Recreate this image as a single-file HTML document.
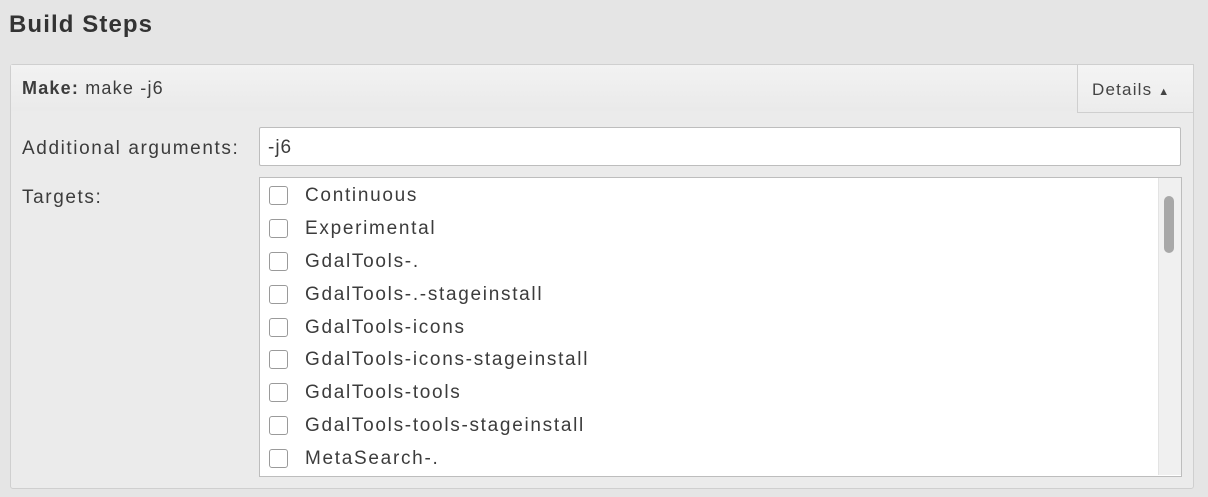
<!DOCTYPE html>
<html><head><style>
body{margin:0;width:1208px;height:497px;background:#e5e5e5;font-family:"Liberation Sans",sans-serif;color:#3c3c3c;position:relative;overflow:hidden}
.abs{position:absolute}
h1{position:absolute;left:9px;top:11px;margin:0;font-size:24px;font-weight:bold;color:#333;letter-spacing:1.1px}
.panel{left:10px;top:64px;width:1182px;height:423px;border:1px solid #cfcfcf;border-radius:3px;background:#ebebeb}
.hdr{left:11px;top:65px;width:1066px;height:46px;background:linear-gradient(#f2f2f2,#eaeaea)}
.det{left:1077px;top:64px;width:115px;height:47px;border:1px solid #cfcfcf;background:linear-gradient(#f4f4f4,#ececec);font-size:17px;line-height:49px;text-indent:14px;color:#444;letter-spacing:1.2px}
.inp{left:259px;top:127px;width:920px;height:37px;background:#fff;border:1px solid #bdbdbd;border-radius:2px;font-size:19px;line-height:39px;text-indent:8px;letter-spacing:1px}
.list{left:259px;top:177px;width:921px;height:298px;background:#fff;border:1px solid #bdbdbd}
.sb{left:1158px;top:178px;width:22px;height:297px;background:#f0f0f0;border-left:1px solid #e3e3e3}
.th{left:1164px;top:196px;width:10px;height:57px;background:#a8a8a8;border-radius:5px}
.lbl{font-size:19px;letter-spacing:1.6px}
.row{position:absolute;left:268px;height:33px;font-size:19px;line-height:34px;letter-spacing:1.7px}
.row i{position:absolute;left:1px;top:7px;width:17px;height:17px;border:1px solid #9a9a9a;border-radius:3px;background:#fff}
.row span{position:absolute;left:37px;white-space:nowrap}
</style></head><body>
<h1>Build Steps</h1>
<div class="abs panel"></div>
<div class="abs hdr"></div>
<div class="abs" style="left:22px;top:78px;font-size:18px;letter-spacing:1.2px"><b>Make:</b> make -j6</div>
<div class="abs det">Details <span style="font-size:11px;letter-spacing:0">▲</span></div>
<div class="abs lbl" style="left:22px;top:138px">Additional arguments:</div>
<div class="abs inp">-j6</div>
<div class="abs lbl" style="left:22px;top:187px">Targets:</div>
<div class="abs list"></div>
<div class="abs sb"></div>
<div class="abs th"></div>
<div class="row" style="top:179px"><i></i><span>Continuous</span></div>
<div class="row" style="top:211.9px"><i></i><span>Experimental</span></div>
<div class="row" style="top:244.8px"><i></i><span>GdalTools-.</span></div>
<div class="row" style="top:277.6px"><i></i><span>GdalTools-.-stageinstall</span></div>
<div class="row" style="top:310.5px"><i></i><span>GdalTools-icons</span></div>
<div class="row" style="top:343.4px"><i></i><span>GdalTools-icons-stageinstall</span></div>
<div class="row" style="top:376.3px"><i></i><span>GdalTools-tools</span></div>
<div class="row" style="top:409.1px"><i></i><span>GdalTools-tools-stageinstall</span></div>
<div class="row" style="top:442px"><i></i><span>MetaSearch-.</span></div>
</body></html>
